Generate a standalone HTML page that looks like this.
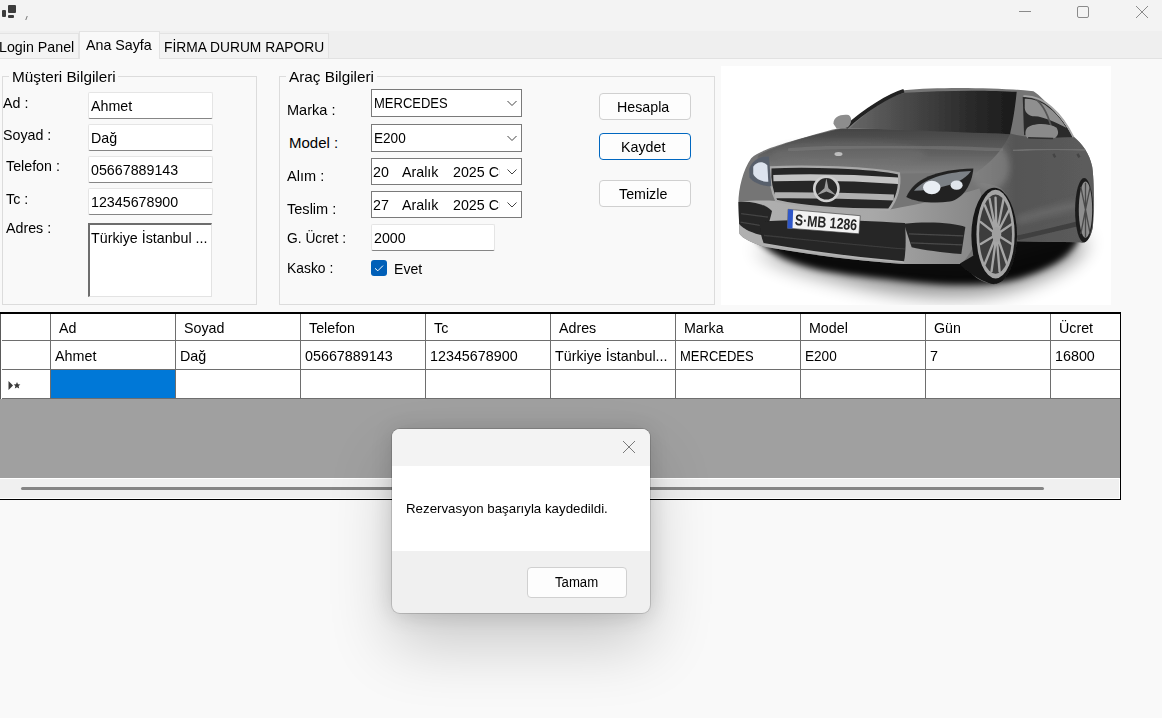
<!DOCTYPE html>
<html><head><meta charset="utf-8">
<style>
*{box-sizing:border-box;margin:0;padding:0}
html,body{width:1162px;height:718px;overflow:hidden;background:#f9f9f9;font-family:"Liberation Sans",sans-serif;color:#000;position:relative}
.a{position:absolute}
.t{position:absolute;white-space:pre;font-size:15px;line-height:18px;transform-origin:0 0}
.tab{position:absolute;border:1px solid #e3e3e3;border-bottom:none;background:#f3f3f3}
.gb{position:absolute;border:1px solid #dcdcdc}
.leg{position:absolute;background:#f9f9f9;height:18px}
.tb{position:absolute;background:#fff;border:1px solid #e5e5e5;border-bottom:1px solid #868686;border-radius:2px}
.cb{position:absolute;background:#fff;border:1px solid #7a7a7a}
.btn{position:absolute;background:#fdfdfd;border:1px solid #d0d0d0;border-radius:4px}
</style></head><body>

<div class="a" style="left:0;top:0;width:1162px;height:31px;background:#f3f3f3"></div>
<div class="a" style="left:1.5px;top:10px;width:4.5px;height:7px;background:#3c3c3c;border-radius:1px"></div>
<div class="a" style="left:8px;top:5px;width:8px;height:8px;background:#3c3c3c;border-radius:1px"></div>
<div class="a" style="left:8px;top:15px;width:6px;height:3px;background:#3c3c3c;border-radius:1px"></div>
<div class="a" style="left:26px;top:16px;width:1px;height:4px;background:#777;transform:skewX(-20deg)"></div>
<svg class="a" style="left:1010px;top:0" width="152" height="31">
 <line x1="9" y1="11.5" x2="21" y2="11.5" stroke="#8a8a8a" stroke-width="1"/>
 <rect x="67.5" y="6.5" width="11" height="11" rx="1.5" fill="none" stroke="#8a8a8a" stroke-width="1"/>
 <path d="M126 6 L138 18 M138 6 L126 18" stroke="#8a8a8a" stroke-width="1"/>
</svg>
<div class="a" style="left:0;top:31px;width:1162px;height:27px;background:#efefef"></div>
<div class="a" style="left:0;top:58px;width:1162px;height:1px;background:#e2e2e2"></div>
<div class="tab" style="left:-2px;top:33px;width:81px;height:25px"></div>
<div class="t" style="left:-1px;top:38px;transform:scaleX(0.95);">Login Panel</div>
<div class="tab" style="left:159px;top:33px;width:170px;height:25px"></div>
<div class="t" style="left:164px;top:38px;transform:scaleX(0.92);">FİRMA DURUM RAPORU</div>
<div class="tab" style="left:79px;top:31px;width:81px;height:28px;background:#f9f9f9"></div>
<div class="t" style="left:86px;top:36px;transform:scaleX(0.95);">Ana Sayfa</div>
<div class="gb" style="left:2px;top:76px;width:255px;height:229px"></div>
<div class="leg" style="left:9px;top:68px;width:109px"></div>
<div class="t" style="left:12px;top:68px;transform:scaleX(1.02);">Müşteri Bilgileri</div>
<div class="t" style="left:3px;top:94px;transform:scaleX(0.95);">Ad :</div>
<div class="t" style="left:3px;top:126px;transform:scaleX(0.95);">Soyad :</div>
<div class="t" style="left:6px;top:157px;transform:scaleX(0.95);">Telefon :</div>
<div class="t" style="left:6px;top:190px;transform:scaleX(0.95);">Tc :</div>
<div class="t" style="left:6px;top:219px;transform:scaleX(0.95);">Adres :</div>
<div class="tb" style="left:88px;top:92px;width:125px;height:27px"></div>
<div class="t" style="left:91px;top:97px;transform:scaleX(0.95);">Ahmet</div>
<div class="tb" style="left:88px;top:124px;width:125px;height:27px"></div>
<div class="t" style="left:91px;top:129px;transform:scaleX(0.95);">Dağ</div>
<div class="tb" style="left:88px;top:156px;width:125px;height:27px"></div>
<div class="t" style="left:91px;top:161px;transform:scaleX(0.95);">05667889143</div>
<div class="tb" style="left:88px;top:188px;width:125px;height:27px"></div>
<div class="t" style="left:91px;top:193px;transform:scaleX(0.95);">12345678900</div>
<div class="a" style="left:88px;top:223px;width:124px;height:74px;background:#fff;border:1px solid #e3e3e3;border-left:2px solid #6d6d6d;border-top:2px solid #6d6d6d"></div>
<div class="t" style="left:91px;top:229px;transform:scaleX(0.95);">Türkiye İstanbul ...</div>
<div class="gb" style="left:279px;top:76px;width:436px;height:229px"></div>
<div class="leg" style="left:286px;top:68px;width:91px"></div>
<div class="t" style="left:289px;top:68px;transform:scaleX(1.02);">Araç Bilgileri</div>
<div class="t" style="left:287px;top:101px;transform:scaleX(0.97);">Marka :</div>
<div class="t" style="left:289px;top:134px;">Model :</div>
<div class="t" style="left:287px;top:167px;transform:scaleX(0.97);">Alım :</div>
<div class="t" style="left:287px;top:200px;transform:scaleX(0.97);">Teslim :</div>
<div class="t" style="left:287px;top:229px;transform:scaleX(0.92);">G. Ücret :</div>
<div class="t" style="left:287px;top:259px;transform:scaleX(0.925);">Kasko :</div>
<div class="cb" style="left:371px;top:89px;width:151px;height:28px"></div>
<div class="t" style="left:374px;top:94px;transform:scaleX(0.867);">MERCEDES</div>
<div class="cb" style="left:371px;top:124px;width:151px;height:28px"></div>
<div class="t" style="left:374px;top:129px;transform:scaleX(0.906);">E200</div>
<div class="cb" style="left:371px;top:158px;width:151px;height:27px"></div>
<div class="a" style="left:372px;top:159px;width:128px;height:25px;overflow:hidden"><div class="t" style="left:1px;top:4px;transform:scaleX(0.95);">20</div><div class="t" style="left:30px;top:4px;transform:scaleX(0.95);">Aralık</div><div class="t" style="left:81px;top:4px;transform:scaleX(0.95);">2025 Cuma</div></div>
<div class="cb" style="left:371px;top:191px;width:151px;height:27px"></div>
<div class="a" style="left:372px;top:192px;width:128px;height:25px;overflow:hidden"><div class="t" style="left:1px;top:4px;transform:scaleX(0.95);">27</div><div class="t" style="left:30px;top:4px;transform:scaleX(0.95);">Aralık</div><div class="t" style="left:81px;top:4px;transform:scaleX(0.95);">2025 Cuma</div></div>
<svg class="a" style="left:500px;top:89px" width="22" height="130">
 <path d="M7.5 12 L12 16.5 L16.5 12" fill="none" stroke="#444" stroke-width="1"/>
 <path d="M7.5 47 L12 51.5 L16.5 47" fill="none" stroke="#444" stroke-width="1"/>
 <path d="M7.5 80.5 L12 85 L16.5 80.5" fill="none" stroke="#444" stroke-width="1"/>
 <path d="M7.5 113.5 L12 118 L16.5 113.5" fill="none" stroke="#444" stroke-width="1"/>
</svg>
<div class="tb" style="left:371px;top:224px;width:124px;height:27px"></div>
<div class="t" style="left:374px;top:229px;transform:scaleX(0.95);">2000</div>
<div class="a" style="left:371px;top:260px;width:16px;height:16px;background:#005fb8;border-radius:3px"></div>
<svg class="a" style="left:371px;top:260px" width="16" height="16"><path d="M4 8.3 L6.8 10.8 L12 5.6" fill="none" stroke="#fff" stroke-width="1"/></svg>
<div class="t" style="left:394px;top:260px;transform:scaleX(0.94);">Evet</div>
<div class="btn" style="left:599px;top:93px;width:92px;height:27px;"></div>
<div class="t" style="left:617px;top:98px;transform:scaleX(0.95);">Hesapla</div>
<div class="btn" style="left:599px;top:133px;width:92px;height:27px;border:1px solid #0067c0;"></div>
<div class="t" style="left:621px;top:138px;transform:scaleX(0.95);">Kaydet</div>
<div class="btn" style="left:599px;top:180px;width:92px;height:27px;"></div>
<div class="t" style="left:619px;top:185px;transform:scaleX(0.95);">Temizle</div>
<svg class="a" style="left:721px;top:66px" width="390" height="239" viewBox="0 0 1162 712" preserveAspectRatio="none">
<defs>
 <filter id="bl" x="-30%" y="-80%" width="160%" height="260%"><feGaussianBlur stdDeviation="10"/></filter>
 <filter id="blw" x="-30%" y="-80%" width="160%" height="260%"><feGaussianBlur stdDeviation="28"/></filter>
 <filter id="bl1" x="-10%" y="-10%" width="120%" height="120%"><feGaussianBlur stdDeviation="2"/></filter>
 <filter id="soft" x="-5%" y="-5%" width="110%" height="110%"><feGaussianBlur stdDeviation="1.6"/></filter>
 <linearGradient id="hood" x1="0" y1="0" x2="0" y2="1">
  <stop offset="0" stop-color="#444"/><stop offset="0.5" stop-color="#5e5e5e"/><stop offset="1" stop-color="#7e7e7e"/>
 </linearGradient>
 <linearGradient id="bump" x1="0" y1="0" x2="1" y2="0">
  <stop offset="0" stop-color="#b0b0b0"/><stop offset="0.55" stop-color="#a8a8a8"/><stop offset="1" stop-color="#858585"/>
 </linearGradient>
 <linearGradient id="side" x1="0" y1="0" x2="1" y2="0">
  <stop offset="0" stop-color="#747474"/><stop offset="0.35" stop-color="#555"/><stop offset="1" stop-color="#5c5c5c"/>
 </linearGradient>
 <linearGradient id="wind" x1="0" y1="0" x2="1" y2="0">
  <stop offset="0" stop-color="#666"/><stop offset="0.35" stop-color="#484848"/><stop offset="0.7" stop-color="#2c2c2c"/><stop offset="1" stop-color="#1a1a1a"/>
 </linearGradient>
 <radialGradient id="rim" cx="0.5" cy="0.5" r="0.5">
  <stop offset="0" stop-color="#8a8a8a"/><stop offset="1" stop-color="#5a5a5a"/>
 </radialGradient>
</defs>
<rect width="1162" height="712" fill="#fff"/>
<g filter="url(#soft)">
<!-- shadows -->
<path d="M100 540 C300 575 500 605 740 612 L900 560 L1090 510 C1090 570 1000 620 880 660 C760 700 560 690 400 650 C250 615 150 590 100 540 Z" fill="#000" opacity="0.45" filter="url(#blw)"/>
<path d="M90 490 C300 535 500 560 740 570 L881 490 L1080 470 C1070 560 990 600 890 632 C790 660 650 655 500 635 C330 618 150 600 90 490 Z" fill="#000" opacity="0.95" filter="url(#bl)"/>
<!-- body silhouette -->
<path d="M52 420 C50 370 65 310 90 275 C115 250 180 232 330 190 L372 182 C430 128 495 85 545 72 C650 62 820 64 931 75 C970 100 1020 170 1051 210 C1075 230 1098 260 1106 300 C1112 340 1112 420 1108 480 C1100 520 1085 530 1070 525 L881 522 C872 600 850 645 810 647 C780 647 755 630 740 610 L716 590 L545 590 C400 580 250 560 126 538 C95 528 65 515 55 500 Z" fill="#747474"/>
<!-- side body -->
<path d="M861 200 C900 215 1000 215 1051 212 C1075 230 1098 260 1106 300 C1112 340 1112 420 1108 480 C1100 520 1085 530 1070 525 L881 522 C880 450 860 380 830 362 C800 348 770 345 752 352 C770 300 820 240 861 200 Z" fill="url(#side)"/>
<path d="M870 252 C950 247 1030 247 1085 250" stroke="#808080" stroke-width="5" fill="none" opacity="0.6" filter="url(#bl1)"/>
<path d="M883 460 C950 440 1030 420 1100 405" stroke="#777" stroke-width="22" fill="none" opacity="0.6" filter="url(#bl)"/>
<path d="M883 512 C960 495 1040 475 1100 462" stroke="#3a3a3a" stroke-width="14" fill="none" opacity="0.8" filter="url(#bl1)"/>
<path d="M990 262 L996 272 M1062 262 L1068 272" stroke="#444" stroke-width="7"/>
<ellipse cx="800" cy="300" rx="60" ry="70" fill="#8c8c8c" opacity="0.55" filter="url(#bl)"/>
<!-- hood -->
<path d="M112 265 C180 232 250 212 352 188 C500 186 700 192 861 203 C840 250 800 290 760 318 L530 320 C400 305 250 298 145 302 C118 297 102 282 112 265 Z" fill="url(#hood)"/>
<path d="M200 250 C400 235 600 240 840 250" stroke="#7e7e7e" stroke-width="10" fill="none" opacity="0.5" filter="url(#bl1)"/>
<ellipse cx="380" cy="262" rx="230" ry="40" fill="#7a7a7a" opacity="0.3" filter="url(#bl)"/>
<ellipse cx="350" cy="262" rx="12" ry="6" fill="#bdbdbd"/>
<!-- windshield -->
<path d="M385 185 C440 130 500 90 548 80 C660 72 800 72 881 77 C876 130 868 175 861 203 C720 198 520 190 385 185 Z" fill="url(#wind)"/>
<path d="M372 183 C430 130 500 88 545 74" stroke="#202020" stroke-width="11" fill="none"/>
<!-- side windows -->
<path d="M899 92 C960 92 1012 140 1048 212 L1000 214 C970 202 930 196 903 206 Z" fill="#2a2a2a"/>
<path d="M905 98 C950 96 995 130 1030 185 C1000 170 960 150 935 150 C918 150 906 140 905 125 Z" fill="#9a9a9a" opacity="0.9"/>
<path d="M935 96 C962 115 978 150 990 205" stroke="#555" stroke-width="5" fill="none"/>
<path d="M901 90 C960 86 1015 140 1050 212" stroke="#a5a5a5" stroke-width="5" fill="none"/>
<!-- right mirror -->
<path d="M911 186 C925 170 975 168 1000 184 C1008 198 1005 211 990 216 L915 216 C905 208 905 196 911 186 Z" fill="#8a8a8a"/>
<path d="M915 214 L990 216" stroke="#333" stroke-width="5"/>
<!-- left mirror -->
<path d="M335 172 C335 152 355 143 380 146 C392 153 390 172 377 183 L345 187 Z" fill="#8d8d8d"/>
<!-- front bumper -->
<path d="M52 405 C90 400 130 400 165 402 C250 422 400 430 500 428 C600 410 690 390 770 365 C792 430 780 520 716 590 L545 590 C400 580 250 560 126 538 C95 528 65 515 55 500 Z" fill="url(#bump)"/>
<!-- grille -->
<path d="M147 302 C250 296 450 302 530 320 C536 360 522 400 500 428 C400 428 250 422 165 402 C150 372 145 332 147 302 Z" fill="#262626" stroke="#a8a8a8" stroke-width="7"/>
<path d="M156 334 C280 330 420 334 528 342" stroke="#c4c4c4" stroke-width="19" fill="none"/>
<path d="M160 385 C280 384 420 388 515 392" stroke="#b0b0b0" stroke-width="18" fill="none"/>
<circle cx="314" cy="366" r="36" fill="#2a2a2a" stroke="#d0d0d0" stroke-width="8"/>
<path d="M314 334 L320 364 L344 386 L314 374 L284 386 L308 364 Z" fill="#9c9c9c"/>
<!-- left headlight -->
<path d="M84 306 C92 284 115 266 143 270 L150 358 C120 358 97 347 85 332 Z" fill="#59606c"/>
<path d="M96 300 C106 284 126 282 138 296 L141 345 C120 345 102 336 96 322 Z" fill="#dce3ee"/>
<!-- right headlight -->
<path d="M552 390 C575 336 640 308 752 305 C748 352 722 394 682 404 C630 410 578 405 552 390 Z" fill="#242424"/>
<path d="M575 372 C610 330 690 315 745 313 C725 340 700 350 660 360 C630 368 600 372 575 372 Z" fill="#b8c0c8" opacity="0.6"/>
<ellipse cx="628" cy="362" rx="26" ry="20" fill="#e9eef4"/>
<ellipse cx="702" cy="355" rx="18" ry="14" fill="#dfe4ea"/>
<!-- left intake -->
<path d="M52 405 C90 402 130 410 152 432 C146 460 136 490 128 505 C95 500 65 485 54 470 Z" fill="#262626"/>
<path d="M60 440 L140 450 M58 465 L134 478" stroke="#444" stroke-width="4"/>
<!-- lower grille -->
<path d="M115 465 C200 455 400 458 548 468 C552 520 550 560 545 584 C400 572 250 552 128 530 C120 510 115 490 115 465 Z" fill="#252525"/>
<path d="M126 530 C250 552 400 572 545 584" stroke="#b4b4b4" stroke-width="5" fill="none"/>
<path d="M128 505 C260 518 420 535 548 545" stroke="#3a3a3a" stroke-width="4" fill="none"/>
<!-- right intake -->
<path d="M545 470 C620 462 700 468 728 480 L716 560 C660 556 600 548 568 540 Z" fill="#262626"/>
<path d="M560 500 L722 506 M565 527 L718 533" stroke="#4a4a4a" stroke-width="4"/>
<!-- license plate -->
<path d="M200 427 L415 446 L411 500 L198 483 Z" fill="#f2f2f2" stroke="#444" stroke-width="2"/>
<path d="M200 427 L215 428 L213 484 L198 483 Z" fill="#2e56c8"/>
<text x="0" y="0" transform="translate(219 474) rotate(4.8)" font-family="Liberation Sans" font-weight="bold" font-size="46" fill="#262626" textLength="186" lengthAdjust="spacingAndGlyphs">S·MB 1286</text>
<path d="M712 588 C725 605 765 640 814 650 L840 600 L760 560 Z" fill="#161616"/>
<!-- front wheel -->
<ellipse cx="814" cy="506" rx="68" ry="143" fill="#141414"/>
<ellipse cx="818" cy="501" rx="57" ry="132" fill="#a5a5a5"/>
<ellipse cx="818" cy="501" rx="49" ry="118" fill="#3e3e3e"/>
<g stroke="#a5a5a5" stroke-width="7" stroke-linecap="round">
<path d="M821 502 L818 392 M821 502 L842 396 M821 502 L860 425 M821 502 L868 470 M821 502 L866 530 M821 502 L852 590 M821 502 L830 613 M821 502 L806 612 M821 502 L786 590 M821 502 L774 530 M821 502 L774 465 M821 502 L786 415 M821 502 L800 395"/>
</g>
<ellipse cx="821" cy="502" rx="14" ry="22" fill="#a0a0a0"/>
<!-- rear wheel -->
<ellipse cx="1082" cy="430" rx="27" ry="96" fill="#1c1c1c"/>
<ellipse cx="1086" cy="428" rx="20" ry="84" fill="#8e8e8e"/>
<g stroke="#4a4a4a" stroke-width="4"><path d="M1086 428 L1086 348 M1086 428 L1100 360 M1086 428 L1100 500 M1086 428 L1086 510 M1086 428 L1072 500 M1086 428 L1072 360"/></g>
</g>
</svg>

<div class="a" style="left:0;top:312px;width:1121px;height:188px;background:#000"></div>
<div class="a" style="left:0;top:314px;width:1120px;height:164px;background:#a0a0a0"></div>
<div class="a" style="left:1px;top:314px;width:1119px;height:85px;background:#fff"></div>
<div class="a" style="left:0;top:314px;width:1px;height:85px;background:#5a5a5a"></div>
<div class="a" style="left:2px;top:340px;width:1118px;height:1px;background:#6e6e6e"></div>
<div class="a" style="left:2px;top:369px;width:1118px;height:1px;background:#6e6e6e"></div>
<div class="a" style="left:2px;top:398px;width:1118px;height:1px;background:#6e6e6e"></div>
<div class="a" style="left:50px;top:314px;width:1px;height:85px;background:#6e6e6e"></div>
<div class="a" style="left:175px;top:314px;width:1px;height:85px;background:#6e6e6e"></div>
<div class="a" style="left:300px;top:314px;width:1px;height:85px;background:#6e6e6e"></div>
<div class="a" style="left:425px;top:314px;width:1px;height:85px;background:#6e6e6e"></div>
<div class="a" style="left:550px;top:314px;width:1px;height:85px;background:#6e6e6e"></div>
<div class="a" style="left:675px;top:314px;width:1px;height:85px;background:#6e6e6e"></div>
<div class="a" style="left:800px;top:314px;width:1px;height:85px;background:#6e6e6e"></div>
<div class="a" style="left:925px;top:314px;width:1px;height:85px;background:#6e6e6e"></div>
<div class="a" style="left:1050px;top:314px;width:1px;height:85px;background:#6e6e6e"></div>
<div class="a" style="left:51px;top:370px;width:124px;height:28px;background:#0078d7"></div>
<div class="t" style="left:59px;top:319px;transform:scaleX(0.95);">Ad</div>
<div class="t" style="left:55px;top:347px;transform:scaleX(0.955);">Ahmet</div>
<div class="t" style="left:184px;top:319px;transform:scaleX(0.95);">Soyad</div>
<div class="t" style="left:180px;top:347px;transform:scaleX(0.955);">Dağ</div>
<div class="t" style="left:309px;top:319px;transform:scaleX(0.95);">Telefon</div>
<div class="t" style="left:305px;top:347px;transform:scaleX(0.955);">05667889143</div>
<div class="t" style="left:434px;top:319px;transform:scaleX(0.95);">Tc</div>
<div class="t" style="left:430px;top:347px;transform:scaleX(0.955);">12345678900</div>
<div class="t" style="left:559px;top:319px;transform:scaleX(0.95);">Adres</div>
<div class="t" style="left:555px;top:347px;transform:scaleX(0.95);">Türkiye İstanbul...</div>
<div class="t" style="left:684px;top:319px;transform:scaleX(0.95);">Marka</div>
<div class="t" style="left:680px;top:347px;transform:scaleX(0.867);">MERCEDES</div>
<div class="t" style="left:809px;top:319px;transform:scaleX(0.95);">Model</div>
<div class="t" style="left:805px;top:347px;transform:scaleX(0.906);">E200</div>
<div class="t" style="left:934px;top:319px;transform:scaleX(0.95);">Gün</div>
<div class="t" style="left:930px;top:347px;transform:scaleX(0.955);">7</div>
<div class="t" style="left:1059px;top:319px;transform:scaleX(0.95);">Ücret</div>
<div class="t" style="left:1055px;top:347px;transform:scaleX(0.955);">16800</div>
<svg class="a" style="left:6px;top:379px" width="16" height="14"><path d="M2.5 2 L7 6.5 L2.5 11 Z" fill="#3a3a3a"/><path d="M11 3 L12 5.3 L14.4 5.5 L12.6 7.1 L13.2 9.5 L11 8.2 L8.8 9.5 L9.4 7.1 L7.6 5.5 L10 5.3 Z" fill="#3a3a3a"/></svg>
<div class="a" style="left:0;top:478px;width:1120px;height:21px;background:#fff"></div>
<div class="a" style="left:0;top:479px;width:1119px;height:19px;background:#f0f0f0"></div>
<div class="a" style="left:21px;top:487px;width:1023px;height:3px;background:#858585;border-radius:2px"></div>
<div class="a" style="left:392px;top:429px;width:258px;height:184px;border-radius:8px;box-shadow:0 32px 64px rgba(0,0,0,0.19),0 2px 21px rgba(0,0,0,0.15),0 0 0 1px rgba(0,0,0,0.14);background:#f0f0f0;overflow:hidden">
 <div class="a" style="left:0;top:0;width:258px;height:37px;background:#f3f3f3"></div>
 <div class="a" style="left:0;top:37px;width:258px;height:85px;background:#fff"></div>
 <svg class="a" style="left:230px;top:11px" width="14" height="14"><path d="M1 1 L13 13 M13 1 L1 13" stroke="#7a7a7a" stroke-width="1"/></svg>
 <div class="t" style="left:14px;top:72px;font-size:13.5px;transform:scaleX(0.985);line-height:16px;">Rezervasyon başarıyla kaydedildi.</div>
 <div class="a" style="left:135px;top:138px;width:100px;height:31px;background:#fdfdfd;border:1px solid #d0d0d0;border-radius:4px"></div>
 <div class="t" style="left:163px;top:145px;font-size:14px;transform:scaleX(0.94);line-height:16px;">Tamam</div>
</div>

</body></html>
